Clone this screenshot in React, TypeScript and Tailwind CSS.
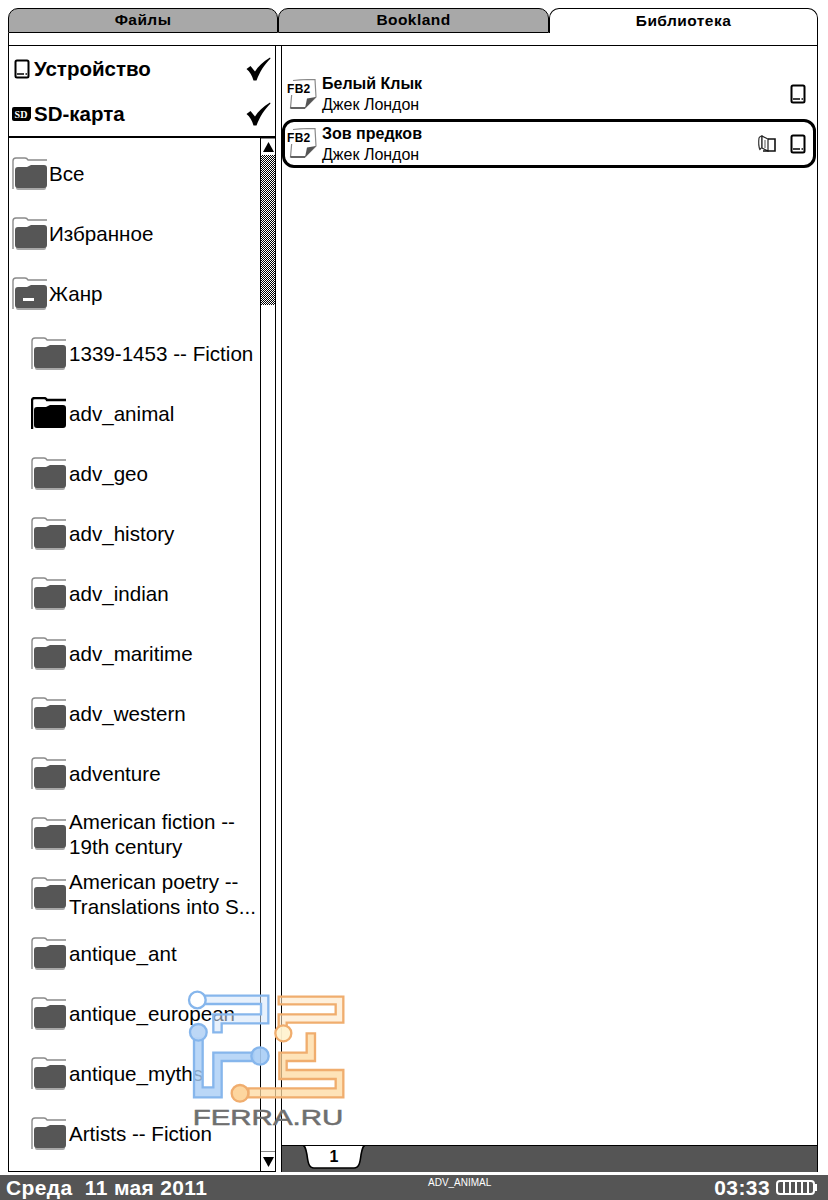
import React from 'react';

const tabs = ['Файлы', 'Bookland', 'Библиотека'];

const folders = [
  { name: 'Все', level: 0 },
  { name: 'Избранное', level: 0 },
  { name: 'Жанр', level: 0, open: true },
  { name: '1339-1453 -- Fiction', level: 1 },
  { name: 'adv_animal', level: 1, active: true },
  { name: 'adv_geo', level: 1 },
  { name: 'adv_history', level: 1 },
  { name: 'adv_indian', level: 1 },
  { name: 'adv_maritime', level: 1 },
  { name: 'adv_western', level: 1 },
  { name: 'adventure', level: 1 },
  { name: 'American fiction --', line2: '19th century', level: 1 },
  { name: 'American poetry --', line2: 'Translations into S...', level: 1 },
  { name: 'antique_ant', level: 1 },
  { name: 'antique_european', level: 1 },
  { name: 'antique_myths', level: 1 },
  { name: 'Artists -- Fiction', level: 1 },
];

const FolderIcon = ({ open = false, active = false }: { open?: boolean; active?: boolean }) => {
  const line = active ? '#000' : '#8a8a8a';
  const body = active ? '#000' : '#565656';
  return (
    <svg width="36" height="34" viewBox="0 0 36 34" className="shrink-0">
      <path d="M1 32V4Q1 1 4 1H13Q15 1 16 3H35" fill="none" stroke={line} strokeWidth={active ? 2.4 : 1.4} />
      {!active && <path d="M4 28H34V31Q34 33 32 33H6Q4 33 4 31Z" fill="#a8a8a8" />}
      <path d="M3 13Q3 10 6 10H15L19 8H32Q35 8 35 11V28Q35 31 32 31H6Q3 31 3 28Z" fill={body} />
      {open && <rect x="11" y="21" width="11" height="3" fill="#fff" />}
    </svg>
  );
};

const DeviceIcon = () => (
  <svg width="16" height="20" viewBox="0 0 16 20" className="shrink-0">
    <rect x="1.500" y="1.500" width="13" height="17" rx="1.500" fill="#fff" stroke="#000" strokeWidth="2" />
    <path d="M3 15H10" stroke="#000" strokeWidth="1.5" />
    <path d="M11.500 15H13" stroke="#000" strokeWidth="1.5" />
  </svg>
);

const SdIcon = () => (
  <svg width="19" height="14" viewBox="0 0 19 14" className="shrink-0">
    <path d="M2 0H19V11L17 14H2Q0 14 0 12V2Q0 0 2 0Z" fill="#000" />
    <text x="9" y="11" textAnchor="middle" fontSize="10" fontWeight="700" fill="#fff" fontFamily="Liberation Serif, serif">SD</text>
  </svg>
);

const CheckIcon = () => (
  <svg width="25" height="24" viewBox="0 0 25 24" className="shrink-0">
    <path d="M0.500 12L4.500 9L9 14.500C12 9.500 17 4.500 24 0.500L24.500 1.500C18 8 14 14.500 10.500 23.500H7.500C6 18.500 4 15 0.500 12Z" fill="#000" />
  </svg>
);

const BookOpenIcon = () => (
  <svg width="19" height="17" viewBox="0 0 19 17" className="shrink-0">
    <path d="M2 3Q3 1 5 1V13Q3 13 3 15Q1 10 2 3Z" fill="#fff" stroke="#333" strokeWidth="1.2" />
    <path d="M5 1L11 4V16L5 13Z" fill="#fff" stroke="#222" strokeWidth="1.2" />
    <path d="M11 4H18V16H6" fill="none" stroke="#111" strokeWidth="1.6" />
    <path d="M8 5V13" stroke="#aaa" strokeWidth="2" />
  </svg>
);

const Fb2Icon = () => (
  <div className="relative w-[31px] h-[31px] shrink-0">
    <svg width="31" height="31" viewBox="0 0 31 31" className="absolute left-0 top-0">
      <path d="M6 1.500Q16 0.500 28 0.500L29 18L18 29H3.500L5 12" fill="#fff" stroke="#8a8a8a" strokeWidth="1.2" />
      <path d="M3.500 29H18" stroke="#222" strokeWidth="1.2" />
      <path d="M18 29.500L29 18L20 19.500Z" fill="#555" />
    </svg>
    <span className="absolute left-0 top-[4px] bg-white text-[12px] leading-[12px] font-bold text-black tracking-[0.3px]">FB2</span>
  </div>
);

const BatteryIcon = () => (
  <svg width="42" height="15" viewBox="0 0 42 15" className="shrink-0">
    <rect x="1" y="1" width="37" height="13" rx="3" fill="none" stroke="#fff" strokeWidth="2" />
    <path d="M39 4H41V11H39Z" fill="#fff" />
    <path d="M8 2V13M14 2V13M20 2V13M26 2V13M32 2V13" stroke="#fff" strokeWidth="2" />
  </svg>
);

const Watermark = () => (
  <svg width="180" height="150" viewBox="0 0 540 450" className="absolute left-[180px] top-[980px] pointer-events-none">
    <g stroke="#86b6ec" strokeWidth="7" fill="#d6e6fa" fillOpacity="0.55">
      <path d="M75 47H265V130H125V157H100V103H243V72H75Z" />
      <circle cx="52" cy="60" r="25" fill="#fff" fillOpacity="0.9" />
      <path d="M42 175H68V322H100V218H220V243H125V352H42Z" fill="#a9cdf5" fillOpacity="0.8" />
      <circle cx="55" cy="157" r="25" fill="#b8d5f6" fillOpacity="0.95" />
      <circle cx="240" cy="228" r="26" fill="#a9cdf5" fillOpacity="0.9" />
    </g>
    <g stroke="#f0ad6e" strokeWidth="7" fill="#fde6c4" fillOpacity="0.6">
      <path d="M296 50H490V128H320V140H296V103H467V73H296Z" />
      <circle cx="310" cy="160" r="24" fill="#fff2d0" fillOpacity="0.95" />
      <path d="M380 160H405V243H320V270H490V352H205V325H467V297H298V218H380Z" fill="#fdd9a0" fillOpacity="0.75" />
      <circle cx="180" cy="340" r="25" fill="#fdd49a" fillOpacity="0.95" />
    </g>
    <text x="38" y="434" fontSize="65" fontFamily="Liberation Sans, Arial, sans-serif" fill="#6f6f6f" stroke="#6f6f6f" strokeWidth="1.5" textLength="452" lengthAdjust="spacingAndGlyphs">FERRA.RU</text>
  </svg>
);

const App = () => {
  return (
    <div className="relative w-[828px] h-[1200px] overflow-hidden bg-white text-black flex flex-col font-['Liberation_Sans',Arial,sans-serif]">
      <div className="ml-[8px] w-[810px] h-[1164px] mt-[8px] mb-[3px] flex flex-col shrink-0">
        {/* Tabs */}
        <div className="flex h-[25px] shrink-0">
          {tabs.map((tab, i) => (
            <div
              key={tab}
              className={
                i === 2
                  ? 'w-[269px] bg-white border border-b-0 border-black rounded-t-[10px] flex items-center justify-center text-[15.5px] font-bold tracking-[0.45px] pb-[1px]'
                  : i === 1
                    ? 'w-[271px] bg-[#a8a8a8] border border-black rounded-t-[10px] flex items-center justify-center text-[15.5px] font-bold tracking-[0.45px] pb-[1px]'
                    : 'w-[270px] bg-[#a8a8a8] border border-black rounded-t-[10px] flex items-center justify-center text-[15.5px] font-bold tracking-[0.45px] pb-[1px]'
              }
            >
              {tab}
            </div>
          ))}
        </div>
        <div className="h-[13px] shrink-0 border-x border-b border-black" />

        {/* Body */}
        <div className="flex flex-1 min-h-0">
          {/* Left panel */}
          <div className="w-[268px] shrink-0 border-x border-b border-black flex flex-col">
            <div className="border-b-2 border-black shrink-0">
              <div className="h-[45px] flex items-center pl-[5px] pr-[4px]">
                <span className="w-[20px] flex justify-start"><DeviceIcon /></span>
                <span className="flex-1 text-[20.5px] font-bold leading-none pt-[2px]">Устройство</span>
                <CheckIcon />
              </div>
              <div className="h-[45px] flex items-center pl-[3px] pr-[4px]">
                <span className="w-[22px] flex justify-start"><SdIcon /></span>
                <span className="flex-1 text-[20.5px] font-bold leading-none pt-[2px]">SD-карта</span>
                <CheckIcon />
              </div>
            </div>
            <div className="flex flex-1 min-h-0">
              <div className="flex-1 min-w-0 pt-[6px] overflow-hidden">
                {folders.map((f) => (
                  <div
                    key={f.name}
                    className={
                      f.level === 0
                        ? 'h-[60px] flex items-center gap-[1px] pl-[3px]'
                        : 'h-[60px] flex items-center gap-[2px] pl-[22px]'
                    }
                  >
                    <FolderIcon open={f.open} active={f.active} />
                    <div className="text-[20.6px] leading-[25px] whitespace-nowrap pb-[1px]">
                      <div>{f.name}</div>
                      {f.line2 && <div>{f.line2}</div>}
                    </div>
                  </div>
                ))}
              </div>
              {/* Scrollbar */}
              <div className="w-[15px] shrink-0 border-l border-black flex flex-col">
                <div className="h-[17px] flex items-center justify-center border-t border-[#888] shrink-0">
                  <svg width="11" height="10" viewBox="0 0 11 10"><path d="M5.500 0L11 10H0Z" fill="#000" /></svg>
                </div>
                <div className="h-[150px] shrink-0 bg-[repeating-conic-gradient(#000_0_25%,#fff_0_50%)] bg-[length:2px_2px]" />
                <div className="flex-1" />
                <div className="h-[20px] flex items-center justify-center border-t border-[#888] shrink-0">
                  <svg width="11" height="10" viewBox="0 0 11 10"><path d="M0 0H11L5.500 10Z" fill="#000" /></svg>
                </div>
              </div>
            </div>
          </div>

          {/* Right panel */}
          <div className="ml-[5px] flex-1 min-w-0 border-x border-black flex flex-col">
            <div className="flex-1 pt-[23px]">
              <div className="h-[50px] mr-[1px] flex items-center pl-[5px] pr-[10px]">
                <Fb2Icon />
                <div className="flex-1 ml-[4px]">
                  <div className="text-[16px] font-bold leading-[20px]">Белый Клык</div>
                  <div className="text-[16px] leading-[20px] pt-[1px]">Джек Лондон</div>
                </div>
                <DeviceIcon />
              </div>
              <div className="h-[49px] mr-[1px] flex items-center pl-[2px] pr-[7px] border-[3px] border-black rounded-[12px]">
                <Fb2Icon />
                <div className="flex-1 ml-[4px] pt-[2px]">
                  <div className="text-[16px] font-bold leading-[20px]">Зов предков</div>
                  <div className="text-[16px] leading-[20px] pt-[1px]">Джек Лондон</div>
                </div>
                <BookOpenIcon />
                <span className="ml-[14px]"><DeviceIcon /></span>
              </div>
            </div>
            {/* Pager */}
            <div className="h-[27px] shrink-0 bg-[#555] border-t border-black pl-[21px]">
              <svg width="62" height="24" viewBox="0 0 62 24" className="block">
                <path d="M-1 -1C2 -1 3 3 4 9C5 17 6 22 11 22H51C56 22 57 17 58 9C59 3 60 -1 63 -1Z" fill="#fff" stroke="#000" strokeWidth="1.6" />
                <text x="31" y="16" textAnchor="middle" fontSize="16" fontWeight="700" fontFamily="Liberation Sans, Arial, sans-serif" fill="#000">1</text>
              </svg>
            </div>
          </div>
        </div>
      </div>

      {/* Status bar */}
      <div className="flex-1 relative bg-[#555] text-white flex items-center pl-[6px] pr-[10px]">
        <span className="text-[21px] font-bold tracking-[0.35px] whitespace-pre leading-none">Среда  11 мая 2011</span>
        <span className="absolute left-[428px] top-[2px] text-[10px] leading-[12px]">ADV_ANIMAL</span>
        <span className="ml-auto text-[21px] font-bold tracking-[0.4px] leading-none mr-[6px]">03:33</span>
        <BatteryIcon />
      </div>

      <Watermark />
    </div>
  );
};

export default App;
